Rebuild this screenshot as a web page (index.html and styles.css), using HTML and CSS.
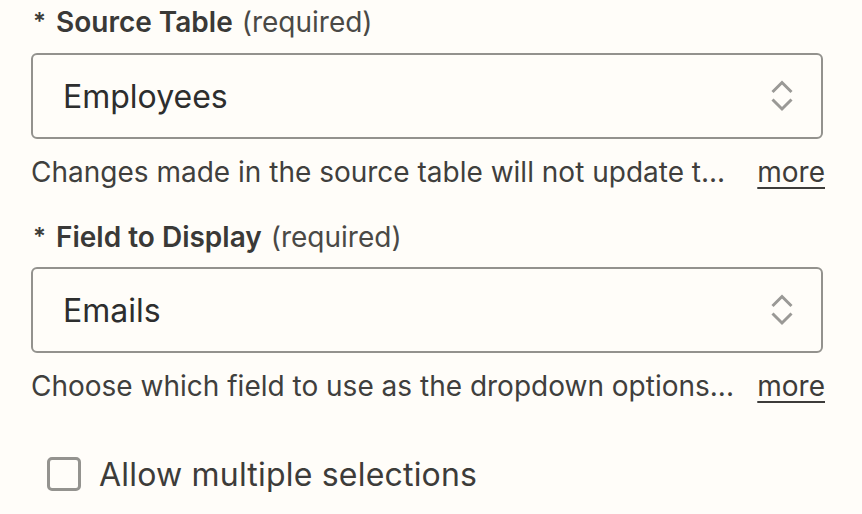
FILE: index.html
```html
<!DOCTYPE html>
<html>
<head>
<meta charset="utf-8">
<link rel="stylesheet" href="styles.css">
</head>
<body>
<div class="form">
  <div class="field">
    <div class="label"><span class="star">*</span><span class="name">Source Table</span><span class="req">(required)</span></div>
    <div class="select">
      <span class="value">Employees</span>
      <svg class="stepper" width="22" height="34" viewBox="0 0 22 34"><path d="M1.5 13 L11 3.5 L20.5 13" fill="none" stroke="#9a9996" stroke-width="3"/><path d="M1.5 20.5 L11 30 L20.5 20.5" fill="none" stroke="#9a9996" stroke-width="3"/></svg>
    </div>
    <div class="help"><span class="help-text">Changes made in the source table will not update t...</span><a class="more">more</a></div>
  </div>
  <div class="field second">
    <div class="label"><span class="star">*</span><span class="name">Field to Display</span><span class="req">(required)</span></div>
    <div class="select">
      <span class="value">Emails</span>
      <svg class="stepper" width="22" height="34" viewBox="0 0 22 34"><path d="M1.5 13 L11 3.5 L20.5 13" fill="none" stroke="#9a9996" stroke-width="3"/><path d="M1.5 20.5 L11 30 L20.5 20.5" fill="none" stroke="#9a9996" stroke-width="3"/></svg>
    </div>
    <div class="help"><span class="help-text">Choose which field to use as the dropdown options...</span><a class="more">more</a></div>
  </div>
  <label class="check">
    <span class="box"></span>
    <span class="check-label">Allow multiple selections</span>
  </label>
</div>
</body>
</html>
```
FILE: styles.css
```css
html, body {
  margin: 0;
  padding: 0;
  background: #fffdf9;
}
body {
  font-family: Inter, "Noto Sans", sans-serif;
  color: #3d3c3a;
}
.form {
  width: 792px;
  padding: 6px 0 0 31px;
  display: flex;
  flex-direction: column;
}
.field {
  display: flex;
  flex-direction: column;
}
.field.second {
  margin-top: 33px;
}
.label {
  display: flex;
  align-items: center;
  height: 32px;
  font-size: 28px;
  line-height: 32px;
}
.star {
  width: 25px;
  padding-left: 2px;
  box-sizing: border-box;
  font-weight: 600;
  font-size: 24px;
}
.name {
  font-weight: 600;
  color: #3a3937;
  margin-right: 9px;
}
.req {
  font-weight: 400;
  color: #4a4946;
}
.select {
  margin-top: 15px;
  height: 86px;
  box-sizing: border-box;
  border: 2px solid #93928e;
  border-radius: 6px;
  display: flex;
  align-items: center;
  justify-content: space-between;
  padding: 0 28px 0 30px;
}
.second .select {
  margin-top: 14px;
}
.value {
  font-size: 32px;
  color: #2d2e2e;
}
.stepper {
  display: block;
}
.help {
  margin-top: 17px;
  height: 32px;
  display: flex;
  align-items: center;
  justify-content: space-between;
  font-size: 28px;
  line-height: 32px;
  color: #403f3d;
}
.more {
  text-decoration: underline;
  text-underline-offset: 5px;
  text-decoration-thickness: 2px;
  color: #3d3c3a;
  margin-right: -2px;
}
.check {
  margin-top: 54px;
  height: 36px;
  display: flex;
  align-items: center;
  padding-left: 16px;
}
.box {
  width: 34px;
  height: 34px;
  box-sizing: border-box;
  border: 3px solid #94938f;
  border-radius: 5px;
  margin-right: 18px;
}
.check-label {
  font-size: 32px;
  letter-spacing: 0.2px;
  color: #3d3c3a;
}
```
